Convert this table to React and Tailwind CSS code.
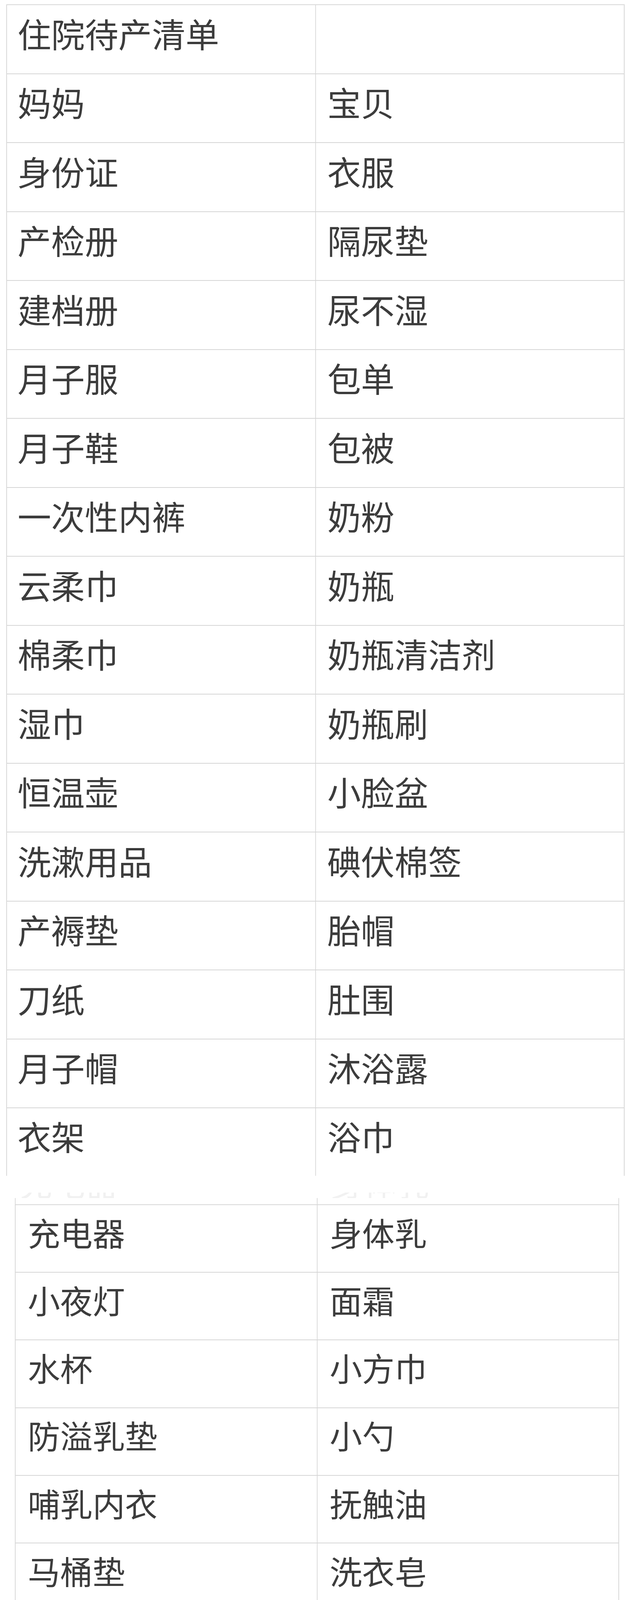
const listOne = [
  ["住院待产清单", ""],
  ["妈妈", "宝贝"],
  ["身份证", "衣服"],
  ["产检册", "隔尿垫"],
  ["建档册", "尿不湿"],
  ["月子服", "包单"],
  ["月子鞋", "包被"],
  ["一次性内裤", "奶粉"],
  ["云柔巾", "奶瓶"],
  ["棉柔巾", "奶瓶清洁剂"],
  ["湿巾", "奶瓶刷"],
  ["恒温壶", "小脸盆"],
  ["洗漱用品", "碘伏棉签"],
  ["产褥垫", "胎帽"],
  ["刀纸", "肚围"],
  ["月子帽", "沐浴露"],
  ["衣架", "浴巾"],
];

const listTwo = [
  ["充电器", "身体乳"],
  ["小夜灯", "面霜"],
  ["水杯", "小方巾"],
  ["防溢乳垫", "小勺"],
  ["哺乳内衣", "抚触油"],
  ["马桶垫", "洗衣皂"],
  ["乳头膏", "屁屁膏"],
  ["吸奶器", ""],
  ["吸奶器文胸", ""],
  ["(产妇卫生巾)", ""],
  ["(弯头吸管)", ""],
  ["(月子袜)", ""],
  ["(蜂蜜露)", ""],
  ["(私处冲洗器)", ""],
  ["(医用腹带)", ""],
  ["(乳盾)", ""],
  ["(冷敷贴)", ""],
];

const font = { fontFamily: '"Noto Sans CJK SC", "Noto Sans", sans-serif' };

function TableOne() {
  return (
    <div className="ml-[16px] mt-[11px] w-[1583px] border-x-2 border-t-2 border-[#d8d8d8]">
      {listOne.map(([a, b], i) => {
        const last = i === listOne.length - 1;
        return (
          <div
            key={i}
            className={
              last
                ? "flex h-[173px]"
                : "flex h-[176.5px] border-b-2 border-[#d6d6d6]"
            }
          >
            <div className="flex w-[791px] items-center border-r-2 border-[#dcdcdc] pb-[32px] pl-[27px] text-[86px] leading-[1.2] text-[#3c3c3c]">
              {a}
            </div>
            <div className="flex flex-1 items-center pb-[32px] pl-[29px] text-[86px] leading-[1.2] text-[#3c3c3c]">
              {b}
            </div>
          </div>
        );
      })}
    </div>
  );
}

function TableTwo() {
  return (
    <div>
      {/* overlap left over from the stitched screenshot */}
      <div className="mt-[43px] flex h-[14px] overflow-hidden text-[84px] leading-none text-[#f1f1f1]">
        <div className="mt-[-68px] w-[795px] pl-[50px]">充电器</div>
        <div className="mt-[-68px] pl-[52px]">身体乳</div>
      </div>
      <div className="ml-[38px] flex h-[16px] w-[1547px] border-x-2 border-[#dcdcdc]">
        <div className="w-[773px] border-r-2 border-[#dcdcdc]" />
      </div>

      <div className="ml-[38px] w-[1547px] border-x-2 border-t-2 border-[#d8d8d8]">
        {listTwo.map(([a, b], i) => (
          <div key={i} className="flex h-[173.2px] border-b-2 border-[#d6d6d6]">
            <div className="flex w-[773px] items-center border-r-2 border-[#dcdcdc] pb-[32px] pl-[31px] text-[83px] leading-[1.2] text-[#3c3c3c]">
              {a}
            </div>
            <div className="flex flex-1 items-center pb-[32px] pl-[31px] text-[83px] leading-[1.2] text-[#3c3c3c]">
              {b}
            </div>
          </div>
        ))}
      </div>
    </div>
  );
}

export default function App() {
  return (
    <div className="h-[6052px] w-[1600px] overflow-hidden bg-white" style={font}>
      <TableOne />
      <TableTwo />
    </div>
  );
}
